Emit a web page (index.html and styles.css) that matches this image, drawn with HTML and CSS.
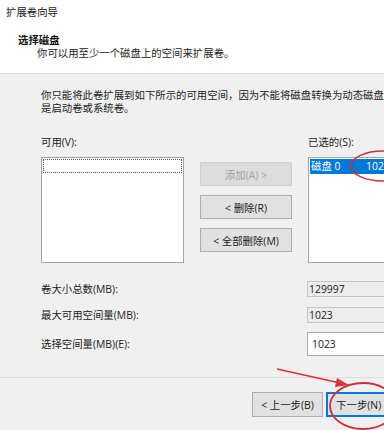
FILE: index.html
```html
<!DOCTYPE html>
<html lang="zh-CN">
<head>
<meta charset="utf-8">
<title>扩展卷向导</title>
<link rel="stylesheet" href="styles.css">
</head>
<body>
<div class="dialog">
  <header class="header">
    <div class="title">扩展卷向导</div>
    <div class="heading">选择磁盘</div>
    <div class="subtitle">你可以用至少一个磁盘上的空间来扩展卷。</div>
  </header>
  <main class="main">
    <p class="para">你只能将此卷扩展到如下所示的可用空间，因为不能将磁盘转换为动态磁盘，或者被扩展的卷<br>是启动卷或系统卷。</p>
    <div class="lists">
      <div class="label">可用(V):</div>
      <div></div>
      <div class="label">已选的(S):</div>
      <div class="listbox">
        <div class="focus-row"></div>
      </div>
      <div class="btncol">
        <button class="btn disabled">添加(A) &gt;</button>
        <button class="btn">&lt; 删除(R)</button>
        <button class="btn">&lt; 全部删除(M)</button>
      </div>
      <div class="listbox">
        <div class="sel-row"><span class="c1">磁盘 0</span><span class="c2">1023</span></div>
      </div>
    </div>
    <div class="fields">
      <div class="frow r1"><span class="flabel">卷大小总数(MB):</span><span class="field ro">129997</span></div>
      <div class="frow r2"><span class="flabel">最大可用空间量(MB):</span><span class="field ro">1023</span></div>
      <div class="frow r3"><span class="flabel">选择空间量(MB)(E):</span><span class="field edit">1023</span></div>
    </div>
  </main>
  <footer class="footer">
    <button class="btn fbtn">&lt; 上一步(B)</button>
    <button class="btn fbtn default">下一步(N) &gt;</button>
  </footer>
</div>
<svg class="marks" width="384" height="430" viewBox="0 0 384 430">
  <ellipse cx="383" cy="166" rx="32" ry="15" fill="none" stroke="#c9313c" stroke-width="1.6"/>
  <ellipse cx="363" cy="406" rx="33" ry="23" fill="none" stroke="#c9313c" stroke-width="1.8"/>
  <line x1="277" y1="369" x2="340" y2="383" stroke="#d8343c" stroke-width="1.5"/>
  <polygon points="349,385 337,378 335,387" fill="#d8343c"/>
</svg>
</body>
</html>
```

FILE: styles.css
```css
html, body {
  margin: 0;
  padding: 0;
}
body {
  width: 384px;
  height: 430px;
  overflow: hidden;
  background: #f0f0f0;
  font-family: "Open Sans", "Noto Sans CJK SC", sans-serif;
  font-size: 10.4px;
  color: #1a1a1a;
  position: relative;
}
.dialog {
  width: 460px;
}
.header {
  background: #ffffff;
  height: 74px;
  box-sizing: border-box;
  border-bottom: 1px solid #dadada;
  padding: 4px 0 0 6px;
}
.title {
  line-height: 16px;
  color: #222;
}
.heading {
  margin: 14px 0 0 12px;
  line-height: 13px;
  font-weight: bold;
  color: #111;
}
.subtitle {
  margin-left: 31px;
  line-height: 13px;
  color: #222;
}
.main {
  padding-left: 41px;
}
.para {
  margin: 15px 0 0 0;
  line-height: 13px;
  white-space: nowrap;
  color: #222;
}
.lists {
  margin-top: 20px;
  display: grid;
  grid-template-columns: 143px 92px 150px;
  column-gap: 16px;
}
.label {
  line-height: 15px;
  margin-bottom: 7px;
  color: #222;
}
.listbox {
  height: 106px;
  box-sizing: border-box;
  background: #ffffff;
  border: 1px solid #a3a3a3;
  padding: 1px;
}
.focus-row {
  height: 14px;
  box-sizing: border-box;
  border: 1px dotted #555;
}
.sel-row {
  height: 15px;
  background: #0078d7;
  color: #ffffff;
  display: flex;
  align-items: center;
  padding-left: 1px;
  line-height: 15px;
}
.c1 {
  width: 55px;
}
.btncol {
  display: flex;
  flex-direction: column;
  gap: 9px;
  padding-top: 5px;
}
.btn {
  font-family: inherit;
  font-size: 10.4px;
  height: 24px;
  box-sizing: border-box;
  background: #e1e1e1;
  border: 1px solid #adadad;
  color: #1a1a1a;
  padding: 0;
  margin: 0;
}
.btn.disabled {
  background: #dcdcdc;
  border-color: #cfcfcf;
  color: #a2a2a2;
}
.fields {
  margin-top: 18px;
  display: flex;
  flex-direction: column;
}
.frow {
  display: grid;
  grid-template-columns: 266px 110px;
  align-items: center;
}
.r2 { margin-top: 10px; }
.r3 { margin-top: 9px; }
.flabel {
  line-height: 13px;
  color: #222;
}
.field {
  box-sizing: border-box;
  display: flex;
  align-items: center;
}
.field.ro {
  height: 16px;
  background: #ececec;
  border: 1px solid #c4c4c4;
  border-right: none;
  padding-left: 1px;
}
.field.edit {
  height: 24px;
  background: #ffffff;
  border: 1px solid #a8a8a8;
  padding-left: 4px;
}
.footer {
  margin-top: 21px;
  border-top: 1px solid #dcdcdc;
  padding: 14px 0 0 252px;
  display: flex;
  gap: 3px;
}
.fbtn {
  width: 71px;
  height: 25px;
}
.fbtn.default {
  width: 74px;
  border: 2px solid #0078d7;
}
.marks {
  position: absolute;
  left: 0;
  top: 0;
  pointer-events: none;
}
```
